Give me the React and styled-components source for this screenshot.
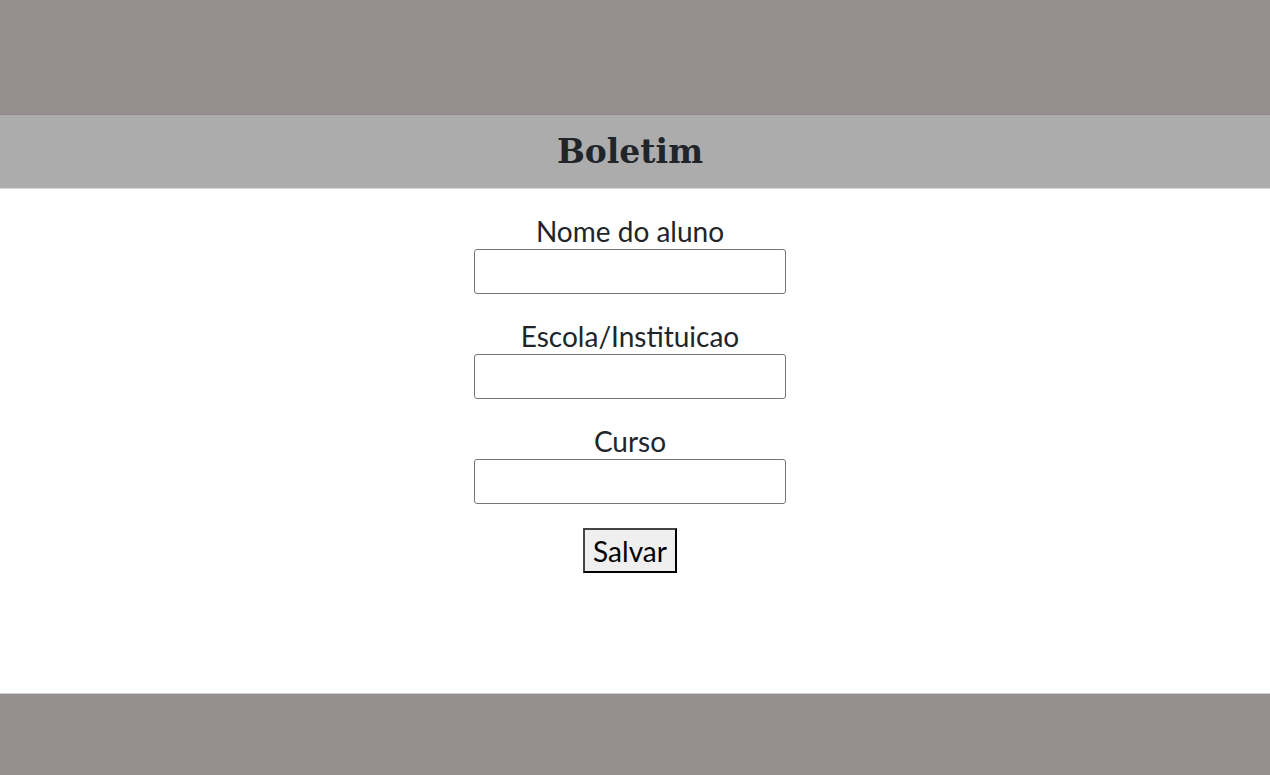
import React from 'react';
import styled, { createGlobalStyle } from 'styled-components';

const GlobalStyle = createGlobalStyle`
    html, body {
        margin: 0;
        padding: 0;
        background: #ffffff;
    }
`;

export default function App() {
    const fields = ['Nome do aluno', 'Escola/Instituicao', 'Curso'];

    return (
        <>
            <GlobalStyle />
            <Page>
                <TopBar />
                <TitleBar>
                    <Title>Boletim</Title>
                </TitleBar>
                <Main>
                    <Form onSubmit={ e => e.preventDefault() }>
                        { fields.map(field => (
                            <Field key={ field }>
                                <Label>{ field }</Label>
                                <Input type="text" />
                            </Field>
                        )) }
                        <Button type="submit">Salvar</Button>
                    </Form>
                </Main>
                <Footer />
            </Page>
        </>
    );
}

const Page = styled.div`
    display: flex;
    flex-direction: column;
    min-height: 100vh;
`;

const TopBar = styled.header`
    height: 114px;
    background: #958f8f;
    border-bottom: 1px solid #8f8a8a;
`;

const TitleBar = styled.div`
    height: 73px;
    padding-right: 10px;
    background: #acacac;
    border-bottom: 1px solid #d8d8d8;
    display: flex;
    align-items: center;
    justify-content: center;
`;

const Title = styled.h1`
    margin: 0;
    font-family: "DejaVu Serif", serif;
    font-weight: bold;
    font-size: 33px;
    color: #212529;
`;

const Main = styled.main`
    flex: 1;
    display: flex;
    justify-content: center;
    padding-right: 10px;
    background: #ffffff;
`;

const Form = styled.form`
    display: flex;
    flex-direction: column;
    align-items: center;
    padding-top: 27px;
`;

const Field = styled.div`
    display: flex;
    flex-direction: column;
    align-items: center;
    margin-bottom: 27px;
`;

const Label = styled.label`
    font-family: "Lato", sans-serif;
    font-size: 28px;
    line-height: 30px;
    padding-bottom: 3px;
    color: #212529;
`;

const Input = styled.input`
    box-sizing: border-box;
    width: 312px;
    height: 45px;
    border: 1px solid #767676;
    border-radius: 3px;
    padding: 0 8px;
    font-size: 20px;
    background: #ffffff;
`;

const Button = styled.button`
    box-sizing: border-box;
    margin-top: -3px;
    width: 94px;
    height: 45px;
    padding: 0;
    font-family: "Lato", sans-serif;
    font-size: 28px;
    color: #000000;
    background: #efefef;
    border: 2px solid #000000;
    border-left-color: #444444;
    border-top-color: #444444;
`;

const Footer = styled.footer`
    height: 81px;
    background: #958f8f;
    border-top: 1px solid #d0d0d0;
`;
